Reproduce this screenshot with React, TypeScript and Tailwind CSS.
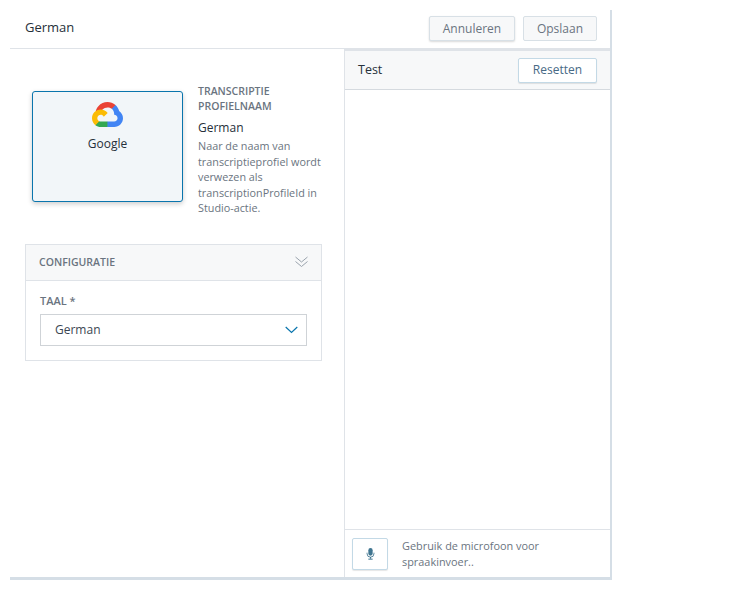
function GoogleCloudLogo() {
  return (
    <svg viewBox="0 0 256 206" className="h-[25px] w-[31px]">
      <path fill="#EA4335" d="M170.252 56.819l22.253-22.253 1.483-9.37C153.437-11.677 88.976-7.496 52.42 33.92 42.267 45.423 34.734 59.764 30.717 74.573l7.97-1.123 44.505-7.34 3.436-3.513c19.797-21.742 53.27-24.667 76.128-6.168l7.496.39z" />
      <path fill="#4285F4" d="M224.205 73.918c-5.115-18.836-15.616-35.769-30.217-48.722l-31.232 31.232c13.188 10.776 20.701 27.01 20.379 44.037v5.544c15.351 0 27.797 12.445 27.797 27.796 0 15.352-12.446 27.485-27.797 27.485h-55.671l-5.466 5.934v33.34l5.466 5.231h55.671c39.93.311 72.552-31.494 72.863-71.424.188-24.203-11.745-46.893-31.793-60.453" />
      <path fill="#34A853" d="M71.87 205.796h55.593V161.29H71.87a27.633 27.633 0 0 1-11.399-2.498l-7.887 2.42-22.409 22.253-1.952 7.574c12.567 9.489 27.9 14.825 43.647 14.757" />
      <path fill="#FBBC05" d="M71.87 61.425C31.94 61.664-.237 94.228.001 134.159c.133 22.298 10.547 43.281 28.222 56.88l32.248-32.247c-13.991-6.321-20.208-22.786-13.887-36.777 6.32-13.99 22.786-20.207 36.776-13.887a27.796 27.796 0 0 1 13.887 13.887l32.248-32.247c-13.721-17.937-35.041-28.424-57.625-28.343" />
    </svg>
  )
}

function DoubleChevron() {
  return (
    <svg viewBox="0 0 13 12" className="h-[12px] w-[13px] text-[#9aa3ad]" fill="none" stroke="currentColor" strokeWidth="1">
      <path d="M.5 1l6 5 6-5" />
      <path d="M.5 5.5l6 5 6-5" />
    </svg>
  )
}

function SelectChevron() {
  return (
    <svg viewBox="0 0 13 8" className="h-[8px] w-[13px] text-[#0a75ad]" fill="none" stroke="currentColor" strokeWidth="1.2">
      <path d="M.7 1l5.8 5.5L12.3 1" />
    </svg>
  )
}

function MicIcon() {
  return (
    <svg viewBox="0 0 10 14" className="h-[12px] w-[9px] text-[#3f7590]" fill="currentColor">
      <rect x="2.5" y="0" width="5" height="9" rx="2.5" />
      <path d="M1 5.5v1.2a4 4 0 0 0 8 0V5.5" fill="none" stroke="currentColor" strokeWidth="1" />
      <rect x="4.4" y="10.5" width="1.2" height="2" />
      <rect x="2.5" y="12.4" width="5" height="1.2" />
    </svg>
  )
}

export default function App() {
  return (
    <div className="h-[589px] w-[742px] bg-white pl-[10px] pt-[10px] font-['Open_Sans',sans-serif] text-[#2e3a46]">
      <div className="flex h-[570px] w-[602px] flex-col border-r-2 border-b-[3px] border-[#d5dee6] bg-white">
        <header className="flex h-[39px] shrink-0 items-start justify-between border-b border-[#dfe3e8] pl-[15px] pr-[13px]">
          <h1 className="mt-[8px] text-[13px] leading-[18px] text-[#26303a]">German</h1>
          <div className="mt-[6px] flex gap-2">
            <button className="h-[25px] w-[86px] rounded-[2px] border border-[#d8e0e6] bg-[#f7f8f9] text-[12px] text-[#6a7480] shadow-[0_1px_2px_rgba(0,0,0,0.15)]">
              Annuleren
            </button>
            <button className="h-[25px] w-[74px] rounded-[2px] border border-[#d8e0e6] bg-[#f7f8f9] text-[12px] text-[#6a7480]">
              Opslaan
            </button>
          </div>
        </header>

        <div className="flex min-h-0 flex-1">
          <section className="w-[334px] shrink-0 px-[15px]">
            <div className="mt-[35px] flex items-start">
              <div className="ml-[7px] mt-[7px] flex h-[111px] w-[151px] shrink-0 flex-col items-center rounded-[3px] border border-[#0a75ad] bg-[#f2f6f9] pt-[10px] shadow-[0_2px_5px_rgba(0,0,0,0.2)]">
                <GoogleCloudLogo />
                <span className="mt-[8px] text-[12px] leading-[18px] text-[#26303a]">Google</span>
              </div>
              <div className="ml-[15px] w-[127px]">
                <h2 className="text-[10.5px] font-semibold leading-[15px] text-[#6a7480]">
                  TRANSCRIPTIE PROFIELNAAM
                </h2>
                <p className="mt-[5px] text-[12px] leading-[18px] text-[#26303a]">German</p>
                <p className="mt-[1px] text-[10.8px] leading-[15.5px] text-[#6a7480]">
                  Naar de naam van transcriptieprofiel wordt verwezen als transcriptionProfileId in Studio-actie.
                </p>
              </div>
            </div>

            <div className="mt-[28px] h-[117px] w-[297px] border border-[#dfe3e8]">
              <div className="flex h-[36px] items-center justify-between border-b border-[#dfe3e8] bg-[#f7f8f9] pl-[13px] pr-[13px]">
                <span className="relative top-px text-[10.5px] font-semibold text-[#6a7480]">CONFIGURATIE</span>
                <DoubleChevron />
              </div>
              <div className="px-[14px] pt-[12px]">
                <label className="block text-[11px] font-semibold leading-[15px] text-[#6a7480]">TAAL *</label>
                <div className="mt-[6px] flex h-[32px] items-center justify-between border border-[#cfd3d7] pl-[14px] pr-[8px]">
                  <span className="text-[12px] text-[#3b4652]">German</span>
                  <SelectChevron />
                </div>
              </div>
            </div>
          </section>

          <section className="flex min-w-0 flex-1 flex-col border-l border-[#dfe3e8]">
            <div className="flex h-[41px] shrink-0 items-center justify-between border-y-2 border-b border-t-[#dfe3e8] border-b-[#d5dadf] bg-[#f7f8f9] pl-[13px] pr-[13px]">
              <span className="text-[12.5px] text-[#26303a]">Test</span>
              <button className="h-[25px] w-[79px] rounded-[2px] border border-[#c3d9e6] bg-white text-[12px] text-[#476a85] shadow-[0_1px_1px_rgba(0,0,0,0.1)]">
                Resetten
              </button>
            </div>
            <div className="flex-1" />
            <div className="flex h-[48px] shrink-0 items-center border-t border-[#dfe3e8] pl-[7px]">
              <button className="flex h-[32px] w-[36px] items-center justify-center rounded-[2px] border border-[#c3d9e6] bg-white shadow-[0_1px_1px_rgba(0,0,0,0.1)]">
                <MicIcon />
              </button>
              <p className="ml-[14px] w-[170px] text-[10.9px] leading-[15.5px] text-[#6a7480]">
                Gebruik de microfoon voor spraakinvoer..
              </p>
            </div>
          </section>
        </div>
      </div>
    </div>
  )
}
